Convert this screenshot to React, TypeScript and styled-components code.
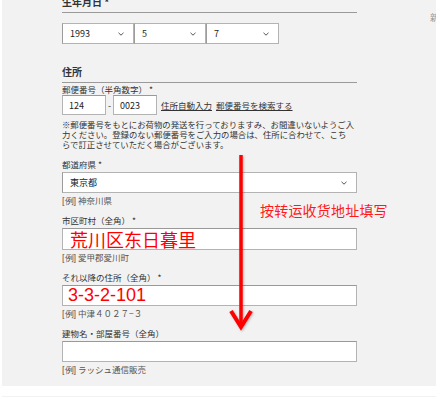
import styled, { createGlobalStyle } from "styled-components";

const GlobalStyle = createGlobalStyle`
  body {
    margin: 0;
    background: #fff;
    font-family: "Noto Sans CJK JP", "Noto Sans", sans-serif;
    color: #333;
  }
`;

const Page = styled.div`
  padding: 0 7px 0 2px;
  height: 397px;
  overflow: hidden;
`;

const Panel = styled.div`
  position: relative;
  display: flex;
  background: #f2f2f2;
  padding: 0 0 10px 60px;
`;

const NextPanel = styled.div`
  margin-top: 10px;
  height: 40px;
  background: #f2f2f2;
`;

const Main = styled.div`
  width: 295px;
`;

const Side = styled.div`
  margin-left: auto;
  width: 6px;
  overflow: hidden;
  padding-top: 12px;
  font-size: 9px;
  line-height: 12px;
  color: #999;
`;

const Heading = styled.h3<{ $top: number }>`
  margin: ${(p) => p.$top}px 0 0;
  font-size: 10px;
  font-weight: bold;
  line-height: 12px;
  padding-bottom: 4px;
  border-bottom: 1px solid #9a9a9a;
`;

const DateRow = styled.div`
  display: flex;
  margin-top: 10px;
`;

const SelectBox = styled.div<{ $w?: number }>`
  box-sizing: border-box;
  width: ${(p) => (p.$w ? `${p.$w}px` : "100%")};
  height: 21px;
  display: flex;
  align-items: center;
  justify-content: space-between;
  padding: 0 9px 0 7px;
  background: #fff;
  border: 1px solid #b3b3b3;
  border-left-color: #9c9c9c;
  font-size: 9px;
  color: #222;
`;

const Field = styled.div<{ $top: number }>`
  margin-top: ${(p) => p.$top}px;
`;

const Label = styled.div<{ $gap?: number }>`
  font-size: 8.5px;
  line-height: 12px;
  margin-bottom: ${(p) => p.$gap ?? 2}px;
  color: #333;
`;

const ZipRow = styled.div`
  display: flex;
  align-items: center;
  height: 20px;
  font-size: 9px;
`;

const ZipInput = styled.input`
  box-sizing: border-box;
  width: 44px;
  height: 20px;
  margin: 0;
  padding: 0 6px;
  border: 1px solid #b3b3b3;
  border-top-color: #999;
  background: #fff;
  font: 9px "Noto Sans CJK JP", sans-serif;
  color: #222;
  outline: none;
`;

const Dash = styled.span`
  width: 7px;
  text-align: center;
  font-size: 9px;
`;

const LinkText = styled.a`
  margin-left: 4px;
  font-size: 8.5px;
  color: #333;
  text-decoration: underline;
`;

const Note = styled.div`
  margin-top: 4px;
  font-size: 8.4px;
  line-height: 10px;
  color: #333;
  span {
    display: block;
    white-space: nowrap;
  }
`;

const TextInput = styled.input<{ $h: number; $latin?: boolean }>`
  display: block;
  box-sizing: border-box;
  width: 100%;
  height: ${(p) => p.$h}px;
  margin: 0;
  padding: 0 0 0 ${(p) => (p.$latin ? 5 : 7)}px;
  border: 1px solid #b3b3b3;
  border-top-color: #999;
  background: #fff;
  color: #ff0000;
  font-size: 18px;
  font-family: ${(p) =>
    p.$latin
      ? `"Liberation Sans", Arial, sans-serif`
      : `"Noto Sans CJK SC", sans-serif`};
  outline: none;
`;

const Example = styled.div`
  margin-top: 1px;
  font-size: 8.5px;
  line-height: 12px;
  color: #555;
  b {
    font-weight: normal;
    font-family: "Liberation Sans", Arial, sans-serif;
    font-size: 9px;
  }
`;

const Annotation = styled.div`
  position: absolute;
  left: 258px;
  top: 200px;
  font-family: "Noto Sans CJK SC", sans-serif;
  font-size: 14px;
  line-height: 20px;
  letter-spacing: 0.2px;
  color: #ff1a1a;
`;

const Arrow = styled.svg`
  position: absolute;
  left: 218px;
  top: 150px;
  filter: drop-shadow(1px 1px 1px rgba(0, 0, 0, 0.25));
`;

const Chevron = () => (
  <svg width="6" height="4" viewBox="0 0 6 4">
    <path d="M0.5 0.8 L3 3.2 L5.5 0.8" fill="none" stroke="#555" strokeWidth="1" />
  </svg>
);

const App = () => {
  return (
    <>
      <GlobalStyle />
      <Page>
        <Panel>
          <Main>
            <Heading $top={-4}>生年月日 *</Heading>
            <DateRow>
              <SelectBox $w={72}>
                1993 <Chevron />
              </SelectBox>
              <SelectBox $w={72}>
                5 <Chevron />
              </SelectBox>
              <SelectBox $w={73}>
                7 <Chevron />
              </SelectBox>
            </DateRow>

            <Heading $top={22}>住所</Heading>
            <Field $top={0}>
              <Label $gap={0}>郵便番号（半角数字） *</Label>
              <ZipRow>
                <ZipInput defaultValue="124" />
                <Dash>-</Dash>
                <ZipInput defaultValue="0023" />
                <LinkText>住所自動入力</LinkText>
                <LinkText>郵便番号を検索する</LinkText>
              </ZipRow>
              <Note>
                <span>※郵便番号をもとにお荷物の発送を行っておりますみ、お間違いないようご入</span>
                <span>力ください。登録のない郵便番号をご入力の場合は、住所に合わせて、こち</span>
                <span>らで訂正させていただく場合がございます。</span>
              </Note>
            </Field>

            <Field $top={9}>
              <Label>都道府県 *</Label>
              <SelectBox>
                東京都 <Chevron />
              </SelectBox>
              <Example>
                <b>[例]</b> 神奈川県
              </Example>
            </Field>

            <Field $top={7}>
              <Label>市区町村（全角） *</Label>
              <TextInput $h={22} defaultValue="荒川区东日暮里" />
              <Example>
                <b>[例]</b> 愛甲郡愛川町
              </Example>
            </Field>

            <Field $top={7}>
              <Label>それ以降の住所（全角） *</Label>
              <TextInput $h={21} $latin defaultValue="3-3-2-101" />
              <Example>
                <b>[例]</b> 中津４０２７−３
              </Example>
            </Field>

            <Field $top={7}>
              <Label>建物名・部屋番号（全角）</Label>
              <TextInput $h={21} defaultValue="" />
              <Example>
                <b>[例]</b> ラッシュ通信販売
              </Example>
            </Field>
          </Main>
          <Side>新</Side>

          <Annotation>按转运收货地址填写</Annotation>
          <Arrow width="40" height="185" viewBox="0 0 40 185">
            <line x1="21" y1="5" x2="21" y2="174" stroke="#ff0000" strokeWidth="3.5" />
            <polyline
              points="11,161 21,177 31,161"
              fill="none"
              stroke="#ff0000"
              strokeWidth="4"
            />
          </Arrow>
        </Panel>
        <NextPanel />
      </Page>
    </>
  );
};

export default App;
